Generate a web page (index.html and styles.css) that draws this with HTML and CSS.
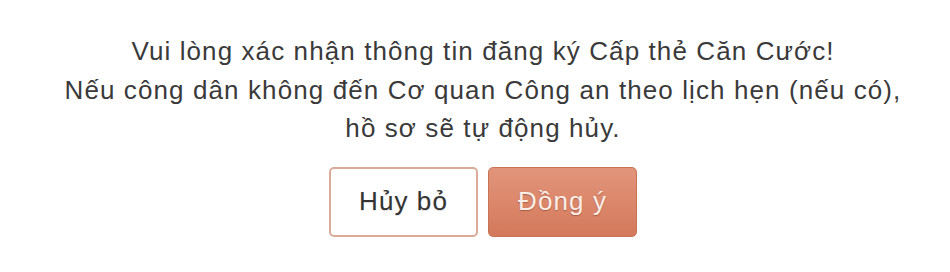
FILE: index.html
```html
<!DOCTYPE html>
<html>
<head>
    <meta charset="UTF-8">
    <meta name="viewport" content="width=device-width, initial-scale=1.0">
    <title>Xác nhận</title>
    <link rel="stylesheet" href="styles.css">
</head>
<body>
    <div class="dialog">
        <div class="message">
            Vui lòng xác nhận thông tin đăng ký Cấp thẻ Căn Cước!<br>
            Nếu công dân không đến Cơ quan Công an theo lịch hẹn (nếu có),<br>
            hồ sơ sẽ tự động hủy.
        </div>

        <div class="actions">
            <button class="btn btn-cancel">Hủy bỏ</button>
            <button class="btn btn-confirm">Đồng ý</button>
        </div>
    </div>
</body>
</html>
```

FILE: styles.css
```css
body {
    margin: 0;
    width: 950px;
    height: 272px;
    background: #ffffff;
    font-family: "Liberation Sans", Arial, sans-serif;
}

.dialog {
    padding: 32px 0 0 16px;
    text-align: center;
}

.message {
    font-size: 26px;
    line-height: 38.5px;
    letter-spacing: 1.1px;
    color: #3a3a3a;
}

.actions {
    display: flex;
    justify-content: center;
    gap: 10px;
    margin-top: 19px;
}

.btn {
    width: 149px;
    height: 70px;
    border-radius: 5px;
    font-family: inherit;
    font-size: 26px;
    letter-spacing: 1.1px;
    cursor: pointer;
}

.btn-cancel {
    background: #ffffff;
    border: 2px solid #d9ab98;
    color: #333333;
    text-shadow: 0 1px 1px rgba(0, 0, 0, 0.15);
}

.btn-confirm {
    background: linear-gradient(180deg, #e2957b 0%, #d4795b 100%);
    border: 1px solid #c97355;
    color: #fbeee8;
    text-shadow: 0 1px 1px rgba(110, 45, 25, 0.45);
}
```
